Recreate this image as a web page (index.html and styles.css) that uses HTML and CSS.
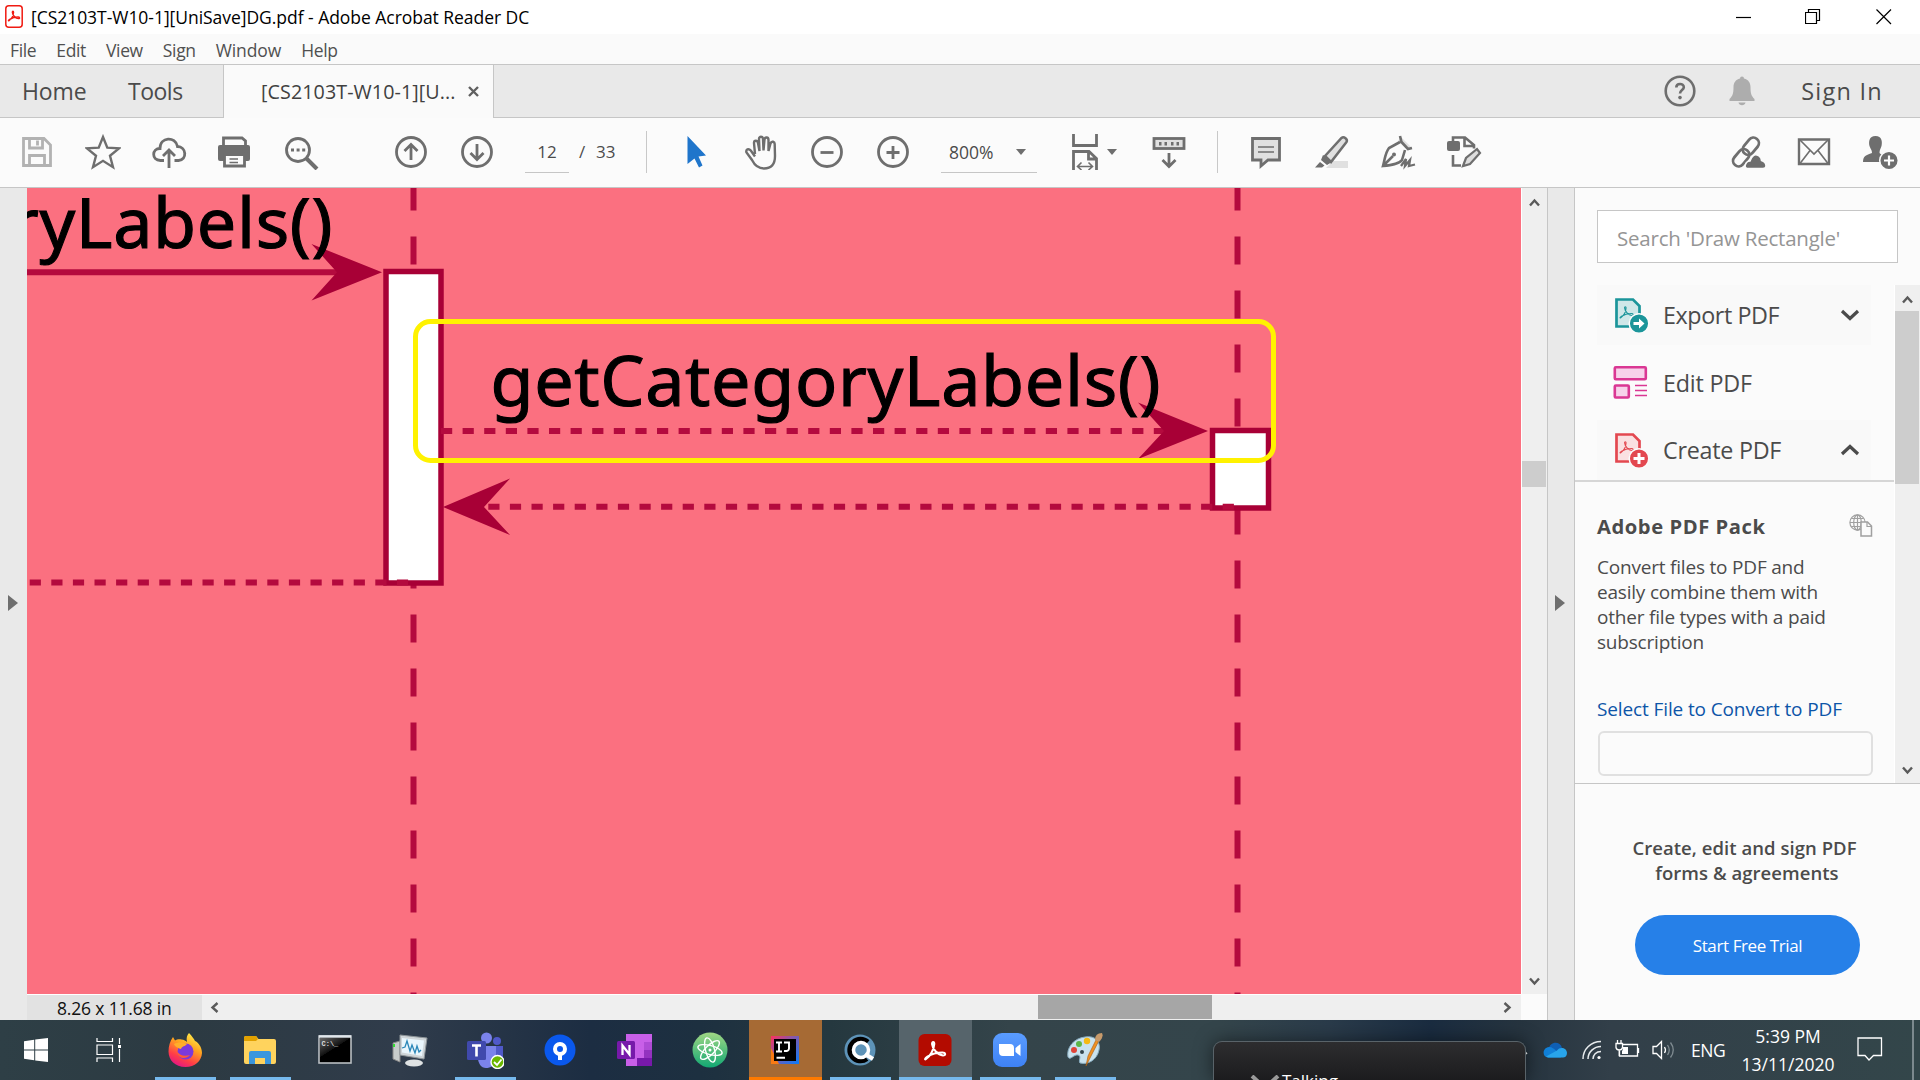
FILE: index.html
```html
<!DOCTYPE html>
<html lang="en">
<head>
<meta charset="utf-8">
<title>[CS2103T-W10-1][UniSave]DG.pdf - Adobe Acrobat Reader DC</title>
<link rel="stylesheet" href="styles.css">
</head>
<body>
<svg class="defs" width="0" height="0" aria-hidden="true">
  <defs>
    <path id="trefoil" d="M2 15C5 13 8 8 8.300 3.500C8.300 1.500 6.500 1.500 6.600 3.500C7 7.500 11 12 15 12.300C17.500 12.300 17 10 14.500 10C10.500 10 5.500 11.600 3 13.200C0.800 14.600 0.800 15.900 2 15Z"/>
    <linearGradient id="ffx" x1="0.8" y1="0" x2="0.3" y2="1"><stop offset="0" stop-color="#fff44f"/><stop offset=".4" stop-color="#ffa31f"/><stop offset=".75" stop-color="#ff3d47"/><stop offset="1" stop-color="#e31587"/></linearGradient>
    <linearGradient id="atm" x1="0" y1="0" x2="0" y2="1"><stop offset="0" stop-color="#a0d784"/><stop offset="1" stop-color="#12a873"/></linearGradient>
    <linearGradient id="idea" x1="0" y1="0" x2="1" y2="1"><stop offset="0" stop-color="#fe315d"/><stop offset=".4" stop-color="#8a56a8"/><stop offset="1" stop-color="#087cfa"/></linearGradient>
    <linearGradient id="zm" x1="0" y1="0" x2="0" y2="1"><stop offset="0" stop-color="#5a9cff"/><stop offset="1" stop-color="#3e82f5"/></linearGradient>
    <linearGradient id="cmdg" x1="0" y1="0" x2="1" y2="1"><stop offset="0" stop-color="#666"/><stop offset=".5" stop-color="#111"/><stop offset=".51" stop-color="#000"/></linearGradient>
  </defs>
</svg>

<div class="window">
  <header class="titlebar">
    <svg class="app-icon" width="18" height="23" viewBox="0 0 18 23"><rect x=".8" y=".8" width="16.400" height="21.400" rx="3" fill="#fff" stroke="#f01b12" stroke-width="1.500"/><g transform="translate(2.600 4.800) scale(.72)"><use href="#trefoil" fill="none" stroke="#f01b12" stroke-width="1.900"/></g></svg>
    <span class="title">[CS2103T-W10-1][UniSave]DG.pdf - Adobe Acrobat Reader DC</span>
    <div class="window-buttons">
      <svg width="16" height="16" viewBox="0 0 16 16"><path d="M0 8.500H15"/></svg>
      <svg width="16" height="16" viewBox="0 0 16 16"><path d="M.5 3.500H11.500V14.500H.5ZM3.500 3.500V.5H14.500V11.500H11.500"/></svg>
      <svg width="16" height="16" viewBox="0 0 16 16"><path d="M.5 .5L15 15M15 .5L.5 15"/></svg>
    </div>
  </header>

  <nav class="menubar"><span>File</span><span>Edit</span><span>View</span><span>Sign</span><span class="wide">Window</span><span>Help</span></nav>

  <div class="tabs">
    <span class="tab-home">Home</span><span class="tab-tools">Tools</span>
    <div class="tab-doc"><span>[CS2103T-W10-1][U...</span><svg width="11" height="11" viewBox="0 0 11 11"><path d="M1 1L10 10M10 1L1 10" stroke="#606060" stroke-width="2.400"/></svg></div>
    <div class="account">
      <svg width="32" height="32" viewBox="0 0 32 32"><circle cx="16" cy="16" r="14.300" fill="none" stroke="#6e6e6e" stroke-width="2.600"/><path d="M12.300 12.500C12.300 7.900 19.800 7.900 19.800 12.200C19.800 15 16 15.200 16 18.600" fill="none" stroke="#6e6e6e" stroke-width="2.600"/><circle cx="16" cy="22.600" r="1.800" fill="#6e6e6e"/></svg>
      <svg width="26" height="30" viewBox="0 0 26 30"><path d="M11 2.500A2 2 0 0 1 15 2.500C19.500 3.500 21.500 7 21.500 11C21.500 18 22.500 20 25.500 23V25H.5V23C3.500 20 4.500 18 4.500 11C4.500 7 6.500 3.500 11 2.500ZM9.500 26.500H16.500C16 30 10 30 9.500 26.500Z" fill="#adadad"/></svg>
      <span>Sign In</span>
    </div>
  </div>

  <div class="toolbar">
    <div class="group g-file">
      <svg class="i dim" viewBox="0 0 36 36"><path d="M4.500 4.500H25L31.500 11V31.500H4.500ZM10.500 5V14H23.500V5M10.500 31V21.500H25.500V31" /><path d="M18.500 6.500V11.500"/></svg>
      <svg class="i" viewBox="0 0 36 36"><path class="thin" d="M18 3L22.300 13.600L34 14.400L25 21.700L28 33.200L18 26.800L8 33.200L11 21.700L2 14.400L13.700 13.600Z"/></svg>
      <svg class="i" viewBox="0 0 36 36"><path d="M13 26.500H9.500C0 26 1 14.500 9 14.500C9 2.500 24.500 2 26.500 12.500C35.500 12.500 36.500 26 27.500 26.500H23.500M18 34V17M12 22L18 16L24 22"/></svg>
      <svg class="i print" viewBox="0 0 36 36"><path d="M7.500 12V4H26L29.500 7V12" /><path class="fill" d="M4 11H32Q34 11 34 13V25Q34 27 32 27H4Q2 27 2 25V13Q2 11 4 11Z"/><path d="M8.500 20.500H28.500V32H8.500Z" fill="#fbfbfb"/><path class="hair" d="M13.500 25H22M13.500 28.500H22"/><circle cx="29.500" cy="16" r="1.400" fill="#fff"/></svg>
      <svg class="i" viewBox="0 0 36 36"><circle cx="15" cy="16" r="11.500"/><path d="M23.500 24.500L34 35" stroke-width="4"/><path class="fill" d="M8 14.500h3v3H8zM13.600 14.500h3v3h-3zM19.200 14.500h3v3h-3z"/></svg>
    </div>
    <div class="group g-nav">
      <svg class="i" viewBox="0 0 36 36"><circle cx="18" cy="18" r="14.500"/><path d="M18 26V11M11.500 17L18 10.500L24.500 17"/></svg>
      <svg class="i" viewBox="0 0 36 36"><circle cx="18" cy="18" r="14.500"/><path d="M18 10V25M11.500 19L18 25.500L24.500 19"/></svg>
    </div>
    <div class="page-no"><span class="current">12</span><span>/</span><span>33</span></div>
    <i class="sep sep-a"></i>
    <div class="group g-view">
      <svg class="i" viewBox="0 0 36 36"><path d="M10.500 2L29 21.500L21.500 22.500L25.500 31.500L22 33.500L17.500 24.500L10.500 30Z" fill="#1f75cb" stroke="none"/></svg>
      <svg class="i" viewBox="-1 0 36 36"><path class="thin" d="M11 20L10 9C10 6 13.500 6 14 9L15.500 17L15 5C15 2 19 2 19 5L19.500 16.500L20.500 5.500C21 2.500 24.500 3 24.500 6L24.500 17L26.500 9.500C27.500 6.500 31 7.500 30.700 10.500L31 22C31 30 27 34.500 20 34.500C14 34.500 10.500 31 8 26L2.500 18.500C1.500 15.500 4.500 14 6.800 16.500L11 22.500"/></svg>
      <svg class="i" viewBox="0 0 36 36"><circle cx="18" cy="18" r="14.500"/><path d="M11.500 18.500H24.500"/></svg>
      <svg class="i" viewBox="0 0 36 36"><circle cx="18" cy="18" r="14.500"/><path d="M11.500 18.500H24.500M18 12V25"/></svg>
    </div>
    <div class="zoom-level"><span>800%</span><b class="caret"></b></div>
    <svg class="i fit" viewBox="0 0 36 36"><path d="M6.500 0V11.500H29.500V0M6.500 36V17.500H22L29.500 24.500V36M21.500 17.500V25H29.500"/><path class="hair" d="M10.500 32.500H25.500M14.500 28.500L10.500 32.500L14.500 36M21.500 28.500L25.500 32.500L21.500 36"/></svg>
    <b class="caret"></b>
    <svg class="i kbd" viewBox="0 0 36 36"><rect x="3" y="4.500" width="30" height="10" fill="#e0e0e0"/><path class="fill" d="M8 8h2.500v3.500H8zM13.500 8H16v3.500h-2.500zM20 8h2.500v3.500H20zM25.500 8H28v3.500h-2.500z"/><path d="M18 19V32M11.500 26L18 32.500L24.500 26"/></svg>
    <i class="sep sep-b"></i>
    <div class="group g-annot">
      <svg class="i" viewBox="0 0 36 36"><path d="M4.500 4.500H31.500V26H20L13 32V26H4.500Z" fill="#e0e0e0"/><path class="hair" d="M10 13H26M10 18H26"/></svg>
      <svg class="i" viewBox="0 0 36 36"><path d="M12 34L19 27H34V34Z" fill="#e0e0e0" stroke="none"/><path d="M11 22L27.500 4C30 2 34 5.500 32.500 8L17 28Z" fill="#e0e0e0" stroke-width="2.500"/><path class="fill" d="M9 21L18 28L13 31L7 26ZM6 28L10.500 31.500L8 33.500H1Z"/></svg>
      <svg class="i" viewBox="0 0 36 36"><path d="M21 3L31 13L28 16L18 7Z" fill="#e0e0e0" stroke="none"/><path d="M20 2L21.500 8L28 15L32 14M20 8L9 14C5 19 5 25 3 32C11 31 19 30 22 26L25 16M4 31L13 22" stroke-width="2.600"/><circle cx="14" cy="20.500" r="2" class="fill"/><path d="M21 32L26 25L25 32L30 26L29 32L35 30.500" stroke-width="2.300"/></svg>
      <svg class="i" viewBox="0 0 36 36"><path d="M7 8V3.500H19L28 11V14.500M18.500 4V12H28M7 21V31.500H15" stroke-width="2.600"/><rect x="1" y="7" width="13" height="10" rx="2" class="fill"/><path d="M17 32L20 24L31 15L34 19L24 30Z" fill="#ddd" stroke-width="2.200"/></svg>
    </div>
    <div class="group g-share">
      <svg class="i" viewBox="0 0 36 36"><g transform="rotate(-50 16 18)"><rect x="-1" y="12.500" width="19" height="11" rx="5.500"/><rect x="14" y="12.500" width="19" height="11" rx="5.500"/></g><path d="M17 34.500Q13.500 33 16.500 28.500Q18 27 20 27Q23 18 29 22Q31.500 24 31.500 26.500Q36 28 36 32Q36 34.500 33 34.500Z" fill="#6e6e6e" stroke="#fbfbfb" stroke-width="1.500"/></svg>
      <svg class="i" viewBox="0 0 36 36"><path d="M3 5.500H33V30H3Z" stroke-width="2.400"/><path class="hair" d="M4 6L18 20L32 6M4 29.500L14 16.500M32 29.500L22 16.500"/></svg>
      <svg class="i" viewBox="0 0 36 36"><path class="fill" d="M13.500 2C20 2 20.500 8 19.500 12C18.500 15 17.500 16 17.500 19C19 21 22 21 24 22L22 28H1C1 22 4 21 10 19C10 16 8.500 15 7.500 12C6.500 8 7 2 13.500 2Z"/><circle cx="27" cy="26.500" r="9.300" fill="#6e6e6e" stroke="#fbfbfb" stroke-width="1.500"/><path d="M27 21.500V31.500M22 26.500H32" stroke="#fff" stroke-width="2.200"/></svg>
    </div>
  </div>

  <main class="workspace">
    <div class="gutter left"><b class="expander"></b></div>
    <section class="document">
      <svg class="diagram" viewBox="27 188 1494 806">
        <rect x="27" y="188" width="1494" height="806" fill="#fb7080"/>
        <g class="life"><path d="M413.500 182.500V994"/><path d="M1237.500 182.500V994"/></g>
        <g class="box"><rect x="386" y="271.500" width="55" height="311.500"/><rect x="1212.500" y="430.500" width="56" height="77.500"/></g>
        <g class="msg"><path d="M27 272.300H342"/><path class="dash" d="M441 431H1170"/><path class="dash" d="M488.300 506.800H1237"/><path class="dash" d="M29.700 582.500H413"/></g>
        <g fill="#a80036"><path d="M382 272.300L311.500 244L337 272.300L311.500 300.500Z"/><path d="M1208 431L1138 402.500L1164 431L1138 459Z"/><path d="M443 507L510 478.500L484 507L510 535Z"/></g>
        <text x="-337.500" y="248.200" textLength="670" lengthAdjust="spacing">getCategoryLabels()</text>
        <text x="490.500" y="405.700" textLength="670" lengthAdjust="spacing">getCategoryLabels()</text>
        <rect x="415.500" y="321.500" width="858" height="139" rx="15" fill="none" stroke="#fff200" stroke-width="5"/>
      </svg>
      <div class="vscroll">
        <svg width="11" height="9" viewBox="0 0 11 9"><path d="M1 7.500L5.500 2.500L10 7.500"/></svg><div class="thumb"></div><svg width="11" height="9" viewBox="0 0 11 9"><path d="M1 1.500L5.500 6.500L10 1.500"/></svg>
      </div>
      <div class="hscroll"><span class="page-size">8.26 x 11.68 in</span>
        <svg width="9" height="11" viewBox="0 0 9 11"><path d="M7.500 1L2.500 5.500L7.500 10"/></svg><div class="thumb"></div><svg width="9" height="11" viewBox="0 0 9 11"><path d="M1.500 1L6.500 5.500L1.500 10"/></svg>
      </div>
      <div class="corner"></div>
    </section>
    <div class="gutter right"><b class="expander"></b></div>

    <aside class="panel">
      <div class="search">Search 'Draw Rectangle'</div>
      <div class="tools">
        <div class="tool-list">
          <div class="tool shaded"><svg class="ti" viewBox="0 0 36 36"><path d="M3.500 2.500H20L26.500 9V29.500H3.500Z" fill="#cfe7e8" stroke="#1b959a" stroke-width="2.700"/><g transform="translate(6 8) scale(.85)"><use href="#trefoil" fill="none" stroke="#1b959a" stroke-width="1.300"/></g><circle cx="26" cy="26.500" r="9.800" fill="#1b959a" stroke="#fbfbfb" stroke-width="1.500"/><path d="M20.500 25H26V21.500L31.500 26.500L26 31.500V28H20.500Z" fill="#fff"/></svg><span class="t1">Export PDF</span><svg class="chev" viewBox="0 0 20 12"><path d="M2 2L10 9.500L18 2"/></svg></div>
          <div class="tool"><svg class="ti" viewBox="0 0 36 36"><g fill="#f7d2ea" stroke="#da3793" stroke-width="2.600"><rect x="1.800" y="2.300" width="31" height="12" rx="1"/><rect x="1.800" y="20.500" width="14" height="12" rx="1"/></g><path d="M22 20.500H34M22 25.500H34M22 30.500H34" stroke="#da3793" stroke-width="1.500"/></svg><span class="t2">Edit PDF</span></div>
          <div class="tool shaded last"><svg class="ti" viewBox="0 0 36 36"><path d="M3.500 2.500H20L26.500 9V29.500H3.500Z" fill="#fae0e1" stroke="#e34850" stroke-width="2.700"/><g transform="translate(6 8) scale(.85)"><use href="#trefoil" fill="none" stroke="#e34850" stroke-width="1.300"/></g><circle cx="26" cy="26.500" r="9.800" fill="#e34850" stroke="#fbfbfb" stroke-width="1.500"/><path d="M26 21V32M20.500 26.500H31.500" stroke="#fff" stroke-width="3"/></svg><span class="t3">Create PDF</span><svg class="chev" viewBox="0 0 20 12"><path d="M2 10L10 2.500L18 10"/></svg></div>
          <div class="pack">
            <div class="pack-head"><h2>Adobe PDF Pack</h2><svg width="24" height="24" viewBox="0 0 24 24" fill="none" stroke="#a0a0a0" stroke-width="1.200"><circle cx="8.500" cy="8.500" r="7.600"/><ellipse cx="8.500" cy="8.500" rx="3.800" ry="7.600"/><path d="M1 8.500H16M8.500 1V16M2.500 4.500H14.500M2.500 12.500H14.500"/><path d="M12 8H18.500L22.500 12V22H12Z" fill="#fbfbfb" stroke-width="1.500"/><path d="M18 8V12.500H22.500"/></svg></div>
            <p>Convert files to PDF and<br>easily combine them with<br>other file types with a paid<br>subscription</p>
            <a>Select File to Convert to PDF</a>
            <div class="file-input"></div>
          </div>
        </div>
        <div class="pscroll"><svg width="11" height="9" viewBox="0 0 11 9"><path d="M1 7.500L5.500 2.500L10 7.500"/></svg><div class="thumb"></div><svg width="11" height="9" viewBox="0 0 11 9"><path d="M1 1.500L5.500 6.500L10 1.500"/></svg></div>
      </div>
      <div class="promo"><p>Create, edit and sign PDF<br>&nbsp;forms &amp; agreements</p><div class="cta">Start Free Trial</div></div>
    </aside>
  </main>
</div>

<footer class="taskbar">
  <div class="slot sys"><svg width="24" height="24" viewBox="0 0 24 24" fill="#fff"><path d="M0 3.300L10.200 1.700V11.400H0ZM11.200 1.600L24 0V11.400H11.200ZM0 12.500H10.200V22.300L0 20.700ZM11.200 12.500H24V24L11.200 22.400Z"/></svg></div>
  <div class="slot sys view"><svg width="25" height="24" viewBox="0 0 25 24" fill="none" stroke="#fff" stroke-width="1.200"><path d="M1 0V3.500H16.500V0M1 24V20H16.500V24M1 7H16.500V16.500H1ZM23.500 0V6M23.500 11V24"/><path d="M22 7H25V10H22Z" fill="#fff" stroke="none"/></svg></div>
  <div class="apps">
    <div class="slot run"><svg width="36" height="36" viewBox="0 0 36 36"><path d="M22 1C25 4 27 7 28 9C31 10 35 15 35 21C34.500 29 28 35 18.500 35C8 35 1.500 28 1.500 19.500C1.500 14 3 9 6 5L8 8.500C10 7 12.500 7 14.500 7.500C17 7.500 19 9 20 10C19 6 20 3 22 1Z" fill="url(#ffx)"/><circle cx="18.500" cy="19.500" r="8" fill="#7b39dc"/><path d="M7 12C11 10 16 10 20 12C18 14.500 15 14 14 17C9 15.500 8 14 7 12Z" fill="#ffae2a"/><path d="M10 19C12 23 17 25 23 23C19 28 10 27 10 19Z" fill="#ff5a36"/></svg></div>
    <div class="slot run"><svg width="34" height="30" viewBox="0 0 34 30"><path d="M1 3Q1 1 3 1H13L15.500 4H31Q33 4 33 6V27Q33 29 31 29H3Q1 29 1 27Z" fill="#ffd35d"/><path d="M1 6V2.500Q1 1 3 1H13L15 4L13 6Z" fill="#e2a100"/><path d="M6 29V18Q6 16 8 16H26Q28 16 28 18V29H22V23H12V29Z" fill="#3a96dd"/></svg></div>
    <div class="slot"><svg width="34" height="30" viewBox="0 0 34 30"><rect x="1" y="1" width="32" height="27" fill="#000" stroke="#b9bec2" stroke-width="1.600"/><path d="M2 3H32V14L2 22Z" fill="url(#cmdg)"/><path d="M1 1.500H33" stroke="#e1e7ec" stroke-width="2.500"/><text x="3.500" y="11" font-family="Liberation Mono, monospace" font-size="7" font-weight="700" fill="#ddd">C:\_</text></svg></div>
    <div class="slot"><svg width="36" height="34" viewBox="0 0 36 34"><path d="M1 10L8 8V29L1 26Z" fill="#c8cccb" stroke="#888"/><path d="M8 2L35 5L32 26L8 22Z" fill="#cfd5d8" stroke="#8d9498"/><path d="M10 5L32 7.500L30 23L10 19.500Z" fill="#eaf6fc"/><path d="M10 15L13 14L15 8L18 18L20 12L23 20L25 13L27 19L29 17" fill="none" stroke="#2b87b8" stroke-width="1.300"/><ellipse cx="22" cy="30" rx="9" ry="3.500" fill="#dfe2e3"/><path d="M2 11V14" stroke="#3d3" stroke-width="2"/></svg></div>
    <div class="slot run"><svg width="38" height="38" viewBox="0 0 38 38"><circle cx="31" cy="10" r="4" fill="#5059c9"/><path d="M25 15H37V26Q35 31 29 29Z" fill="#5059c9"/><circle cx="20.500" cy="7" r="5.500" fill="#7b83eb"/><path d="M12 15H30V27C30 35 24 37 20 37C15 37 12 32 12 27Z" fill="#7b83eb"/><rect x="1" y="10" width="19" height="19" rx="1.500" fill="#4049ac"/><path d="M6 14.500H15M10.500 14.500V25.500" stroke="#fff" stroke-width="2.600"/><circle cx="31.500" cy="31" r="6.500" fill="#6bb700" stroke="#fff" stroke-width="1.400"/><path d="M28 31L31 34L35.500 28.500" fill="none" stroke="#fff" stroke-width="1.800"/></svg></div>
    <div class="slot"><svg width="32" height="32" viewBox="0 0 32 32"><circle cx="16" cy="16" r="15.500" fill="#0a58ed"/><circle cx="16" cy="15" r="5" fill="none" stroke="#fff" stroke-width="4"/><path d="M16 19V26" stroke="#fff" stroke-width="4"/></svg></div>
    <div class="slot"><svg width="36" height="34" viewBox="0 0 36 34"><path d="M9 1H35V33H9Z" fill="#c85fe8"/><path d="M27 9H35V17H27Z" fill="#ae4bd5"/><path d="M27 17H35V25H27Z" fill="#9332bf"/><path d="M20 25H35V33H20Z" fill="#7719aa"/><rect x="0" y="8" width="18" height="18" rx="1.500" fill="#7719aa"/><path d="M5.500 22V12.500L12.500 21.500V12" fill="none" stroke="#fff" stroke-width="2.300"/></svg></div>
    <div class="slot"><svg width="36" height="36" viewBox="0 0 36 36"><circle cx="18" cy="18" r="17.500" fill="url(#atm)"/><g fill="none" stroke="#fff" stroke-width="1.400"><ellipse cx="18" cy="18" rx="12.500" ry="4.500" transform="rotate(15 18 18)"/><ellipse cx="18" cy="18" rx="12.500" ry="4.500" transform="rotate(75 18 18)"/><ellipse cx="18" cy="18" rx="12.500" ry="4.500" transform="rotate(135 18 18)"/></g><circle cx="18" cy="18" r="1.500" fill="#fff"/></svg></div>
    <div class="slot alert"><svg width="28" height="28" viewBox="0 0 28 28"><rect width="28" height="28" fill="url(#idea)"/><path d="M0 12L8 28H0Z" fill="#f97a12"/><rect x="3" y="3" width="22" height="22" fill="#000"/><path d="M5 6.500H11M8 6.500V15.500M5 15.500H11M13 6.500H18V12.500Q18 15.500 13 15M5.500 21.800H14" fill="none" stroke="#fff" stroke-width="1.900"/></svg></div>
    <div class="slot run"><svg width="34" height="32" viewBox="0 0 34 32"><circle cx="17" cy="16" r="15.500" fill="#5d93b8"/><path d="M25 8A11 11 0 1 0 24 25" fill="none" stroke="#000" stroke-width="4.500"/><circle cx="18" cy="16" r="7.500" fill="none" stroke="#fff" stroke-width="3.500"/><path d="M22 20L30 25" stroke="#fff" stroke-width="4"/></svg></div>
    <div class="slot active"><svg width="34" height="34" viewBox="0 0 34 34"><rect x=".5" y="1" width="33" height="32" rx="6" fill="#b30b00"/><g transform="translate(5.500 6.500) scale(1.300)"><use href="#trefoil" fill="none" stroke="#fff" stroke-width="1.600"/></g></svg></div>
    <div class="slot run"><svg width="34" height="34" viewBox="0 0 34 34"><rect width="34" height="34" rx="9" fill="url(#zm)"/><path d="M6 11H17Q21 11 21 15V23H10Q6 23 6 19ZM22.500 15L27.500 11V23L22.500 19Z" fill="#fff"/></svg></div>
    <div class="slot run"><svg width="36" height="36" viewBox="0 0 36 36"><path d="M18 5C28 3 34 10 32 18C30 28 21 33 13 31C11 29 15 24 11 23C7 22 3 29 1 25C-1 16 7 6 18 5Z" fill="#c9e2ee" stroke="#86aabd"/><circle cx="7" cy="18" r="3" fill="#e04438"/><circle cx="12" cy="12" r="3" fill="#5cb647"/><circle cx="20" cy="9" r="3.200" fill="#f5b912"/><circle cx="15" cy="20" r="2" fill="#33454c"/><path d="M19 34L21 24L29 8L31.500 9.500L23.500 25Z" fill="#ef9123" stroke="#a65b10" stroke-width=".6"/><path d="M28 8Q28 1 35 1Q37 5 32 10Z" fill="#c79a6b"/></svg></div>
  </div>

  <div class="tray">
    <svg class="up" width="18" height="12" viewBox="0 0 18 12"><path d="M1 11L9 2L17 11" fill="none" stroke="#fff" stroke-width="1.400"/></svg>
    <svg class="cloud" width="24" height="16" viewBox="0 0 24 16"><path d="M6 7C6 0 17-2 19 6L12 12Z" fill="#0f5fb4"/><path d="M5 15.500C-1 15 -1 6 6 5C9 5 12 7 14 10L18 15.500Z" fill="#1180d8"/><path d="M3 14.500L14 8.500C17 4 24 6 24 11C24 14 22 15.500 20 15.500H5Z" fill="#28a4ea"/></svg>
    <svg class="wifi" width="20" height="20" viewBox="0 0 20 20" fill="none" stroke="#e8ecee" stroke-width="1.500"><path d="M1 19C1 9 9 1.500 19 1.500M6 19C6 12 12 6.500 19 6.500M11 19C11 15 14 11.500 19 11.500"/><circle cx="17" cy="17.500" r="1.600" fill="#fff" stroke="none"/></svg>
    <svg class="bat" width="25" height="18" viewBox="0 0 25 18" fill="none" stroke="#fff" stroke-width="1.300"><path d="M8 4.500H22.500V16H4.500V11M23.500 8V13M1 3.500H7.500V7.500Q7 10 4.200 10Q1.500 10 1 7.500ZM2.500 0V3.500M6 0V3.500M4.200 10V16"/><path d="M8 7H13V14H7V11Q8 10 8 7Z" fill="#fff" stroke="none"/></svg>
    <svg class="vol" width="23" height="20" viewBox="0 0 23 20" fill="none" stroke="#fff" stroke-width="1.300"><path d="M1 6.500H4.500L9.500 1.500V18.500L4.500 13.500H1Z"/><path d="M12.500 7Q14.500 10 12.500 13"/><path d="M15.500 5Q19 10 15.500 15M18.500 2.500Q24 10 18.500 17.500" stroke="#7f8b91"/></svg>
    <span class="lang">ENG</span>
    <div class="clock"><span>5:39 PM</span><span class="date">13/11/2020</span></div>
    <svg class="note" width="26" height="26" viewBox="0 0 26 26"><path d="M1 1H24.500V18.500H16.500L12 23L8 18.500H1Z" fill="none" stroke="#fff" stroke-width="1.300"/></svg>
    <i class="desk"></i>
  </div>
  <div class="toast"><svg width="30" height="14" viewBox="0 0 30 14"><path d="M2 1L15 13L28 1" fill="none" stroke="#9a9a9a" stroke-width="4"/></svg><span>Talking</span></div>
</footer>
</body>
</html>
```
FILE: styles.css
```css
* { box-sizing: border-box; }
body { margin: 0; width: 1920px; height: 1080px; overflow: hidden; display: flex; flex-direction: column; font-family: "Open Sans", "Noto Sans", sans-serif; font-size: 17.5px; color: #4b4b4b; white-space: nowrap; }
svg { display: block; flex: none; }
.defs { position: absolute; }
.window { height: 1020px; display: flex; flex-direction: column; background: #fbfbfb; }

.titlebar { height: 34px; background: #fff; display: flex; align-items: center; padding-left: 5px; color: #000; }
.app-icon { margin-top: -1px; }
.title { margin-left: 8px; letter-spacing: -.04px; }
.window-buttons { margin-left: auto; display: flex; gap: 54px; padding-right: 28px; margin-top: -1px; }
.window-buttons svg:nth-child(2) { margin: 0 1px 0 -1px; }
.window-buttons path { fill: none; stroke: #000; stroke-width: 1.2; }

.menubar { height: 30px; background: #fafafa; display: flex; align-items: center; gap: 20px; padding: 1px 0 0 10px; letter-spacing: -.35px; color: #505050; }
.menubar .wide { letter-spacing: -.1px; }

.tabs { height: 54px; background: #e9e9e9; border-top: 1px solid #c6c6c6; box-shadow: inset 0 -1px #c6c6c6; display: flex; align-items: center; font-size: 23px; color: #4b4b4b; }
.tab-home, .tab-tools { padding-bottom: 2px; }
.tab-home { margin-left: 22px; width: 106px; letter-spacing: -.1px; }
.tab-tools { width: 95px; letter-spacing: -.5px; }
.tab-doc { height: 53px; width: 271px; background: #fafafa; border: solid #c6c6c6; border-width: 0 1px; display: flex; align-items: center; padding: 0 0 1px 37px; font-size: 19.7px; letter-spacing: .08px; color: #404040; }
.tab-doc svg { margin-left: 13px; }
.account { margin-left: auto; display: flex; align-items: center; padding: 0 37px 2px 0; }
.account svg + svg { margin-left: 33px; }
.account span { margin-left: 46px; font-size: 23.5px; letter-spacing: 1.25px; }

.toolbar { height: 70px; border-bottom: 1px solid #c6c6c6; display: flex; align-items: center; padding-bottom: 1px; }
.group { display: flex; gap: 30px; }
.i { width: 36px; height: 36px; fill: none; stroke: #6e6e6e; stroke-width: 2.8; }
.i.dim { stroke: #b2b2b2; }
.i.print { margin: 0 1px 0 -1px; }
.i .thin { stroke-width: 2.4; }
.i .hair { stroke-width: 1.6; }
.i .fill { fill: #6e6e6e; stroke: none; }
.g-file { margin-left: 19px; }
.g-nav { margin-left: 74px; }
.page-no { display: flex; margin-left: 30px; height: 42px; line-height: 42px; width: 121px; font-size: 17px; }
.page-no .current { width: 44px; text-align: center; border-bottom: 1px solid #c6c6c6; margin-right: 10px; }
.page-no span:nth-child(2) { width: 17px; }
.sep { width: 1px; height: 42px; background: #c8c8c8; }
.g-view { margin-left: 30px; }
.zoom-level { margin-left: 30px; width: 96px; height: 42px; border-bottom: 1px solid #c6c6c6; display: flex; align-items: center; justify-content: space-between; padding: 0 11px 0 8px; }
.caret { border: solid transparent; border-width: 6px 5.5px 0; border-top-color: #6e6e6e; }
.fit { margin-left: 30px; margin-right: 4px; }
.kbd { margin-left: 34px; }
.sep-b { margin-left: 30px; }
.g-annot { margin-left: 30px; }
.g-share { margin-left: auto; padding-right: 22px; }

.workspace { flex: 1; display: flex; min-height: 0; }
.gutter { width: 27px; background: #e9e9e9; padding: 407px 0 0 8px; }
.gutter.right { width: 28px; border: solid #c6c6c6; border-width: 0 1px; padding-left: 7px; }
.expander { display: block; width: 10px; border: solid transparent; border-width: 8px 0 8px 10px; border-left-color: #6e6e6e; }
.document { width: 1520px; display: grid; grid-template: 806px 26px / 1494px 26px; }
.diagram { width: 1494px; height: 806px; }
.life { fill: none; stroke: #b40a3e; stroke-width: 6; stroke-dasharray: 28 26; }
.box { fill: #fff; stroke: #a80036; stroke-width: 5.5; }
.msg { fill: none; stroke: #b40a3e; stroke-width: 6; }
.msg .dash { stroke-dasharray: 11.2 10.4; }
.diagram text { font-family: "Noto Sans", sans-serif; font-size: 70px; fill: #000; stroke: #000; stroke-width: 1.1px; }
.vscroll, .pscroll { background: #efefef; display: flex; flex-direction: column; align-items: center; justify-content: space-between; }
.vscroll { border-left: 1px solid #fff; padding: 10px 1px 8px 0; }
.vscroll path, .hscroll path, .pscroll path { fill: none; stroke: #5a5a5a; stroke-width: 2.4; }
.vscroll .thumb { width: 24px; height: 26px; background: #cdcdcd; margin: 254px 0 490px; }
.hscroll { background: #efefef; border-top: 1px solid #fff; display: flex; align-items: center; }
.page-size { width: 175px; height: 25px; background: #e2e2e2; line-height: 26px; padding-left: 30px; color: #111; letter-spacing: -.17px; }
.hscroll svg { margin-left: 8px; }
.hscroll .thumb { width: 174px; height: 24px; background: #a6a6a6; margin: 0 283px 0 819px; align-self: flex-start; }
.corner { background: #fbfbfb; }

.panel { width: 345px; display: flex; flex-direction: column; }
.search { height: 53px; width: 301px; margin: 22px 0 22px 22px; background: #fff; border: 1px solid #c6c6c6; padding-left: 19px; line-height: 54px; font-size: 20.5px; letter-spacing: -.22px; color: #959595; }
.tools { height: 499px; display: flex; border-bottom: 1px solid #c6c6c6; }
.tool-list { width: 319px; }
.tool { height: 68px; padding: 0 11px 6px 16px; margin: 0 23px 0 22px; display: flex; align-items: center; font-size: 23.3px; color: #4b4b4b; }
.tool.shaded { height: 60px; background: #f9f9f9; padding-bottom: 0; }
.tool + .tool:not(.shaded) { height: 75px; padding-bottom: 0; }
.tool.last { height: 60px; }
.ti { width: 36px; height: 36px; }
.tool span { margin-left: 14px; }
.t1 { letter-spacing: -.4px; }
.t2 { letter-spacing: -.2px; }
.t3 { letter-spacing: -.25px; }
.chev { margin-left: auto; width: 20px; height: 12px; fill: none; stroke: #4b4b4b; stroke-width: 3.2; }
.pack { border-top: 2px solid #d6d6d6; padding: 28px 21px 0 22px; }
.pack-head { display: flex; justify-content: space-between; align-items: center; height: 32px; }
h2 { margin: 0; font-size: 20.2px; font-weight: 700; letter-spacing: .55px; }
.pack p { margin: 13px 0 0; font-size: 19px; line-height: 25px; letter-spacing: -.2px; }
.pack a { display: block; margin-top: 42px; line-height: 25px; color: #0d55a8; font-size: 19px; letter-spacing: -.12px; }
.file-input { width: 275px; height: 45px; margin: 9px 0 0 1px; border: 2px solid #e0e0e0; border-radius: 6px; }
.pscroll { width: 26px; border-left: 1px solid #fff; padding: 10px 1px 8px 0; }
.pscroll .thumb { width: 24px; height: 177px; background: #cdcdcd; margin: 7px 0 282px; }
.promo { padding: 51px 0 0 60px; width: 285px; text-align: center; }
.promo p { margin: 0 0 0 -4px; font-size: 18.5px; line-height: 25px; font-weight: 600; width: 227px; letter-spacing: .05px; }
.cta { margin-top: 30px; height: 60px; line-height: 61px; border-radius: 30px; background: #2680e8; color: #fff; font-size: 17px; letter-spacing: -.4px; }

.taskbar { height: 60px; position: relative; display: flex; color: #fff; background: linear-gradient(90deg, #2e3f46 0, #2c3a42 190px, #303c4b 400px, #1c2d42 590px, #1d3040 700px, #25383f 830px, #34444a 1010px, #34454b 1220px, #2a3b4a 1330px, #1a2c40 1430px, #26343f 1520px, #323f49 1610px, #33464a 100%); }
.slot { width: 73px; height: 60px; display: flex; align-items: center; justify-content: center; }
.slot svg { margin-right: 2px; }
.slot.sys svg { margin-right: 0; }
.sys { width: 72px; }
.view { margin-right: 5px; }
.apps { display: flex; gap: 2px; }
.run { background: linear-gradient(#76b9ed, #76b9ed) center bottom / 61px 3px no-repeat; }
.active { background: #56646b; border-bottom: 3px solid #76b9ed; padding-top: 2px; }
.alert { background: #a66a34; border-bottom: 3px solid #ff7a00; padding-top: 3px; }
.tray { margin-left: auto; display: flex; align-items: center; height: 60px; }
.up { margin-right: 15px; margin-top: -2px; }
.cloud { margin-right: 15px; }
.wifi { margin-right: 13px; }
.bat { margin-right: 12px; margin-top: -3px; }
.vol { margin-right: 16px; }
.lang { width: 50px; letter-spacing: -.45px; }
.clock { width: 94px; text-align: center; display: flex; flex-direction: column; line-height: 28px; margin-top: -1px; }
.note { margin: 0 29px 0 22px; }
.desk { width: 2px; height: 60px; background: #7c898e; margin-right: 6px; }
.toast { position: absolute; left: 1213px; top: 21px; width: 313px; height: 39px; overflow: hidden; border-radius: 9px 9px 0 0; background: linear-gradient(#2d2d2f, #1c1c1e); border: 1.5px solid #596369; border-bottom: 0; box-shadow: 0 0 18px rgba(0,0,0,.5); display: flex; padding: 33px 0 0 36px; font-size: 17px; line-height: 17px; }
.toast span { margin: -3px 0 0 2px; }
```
